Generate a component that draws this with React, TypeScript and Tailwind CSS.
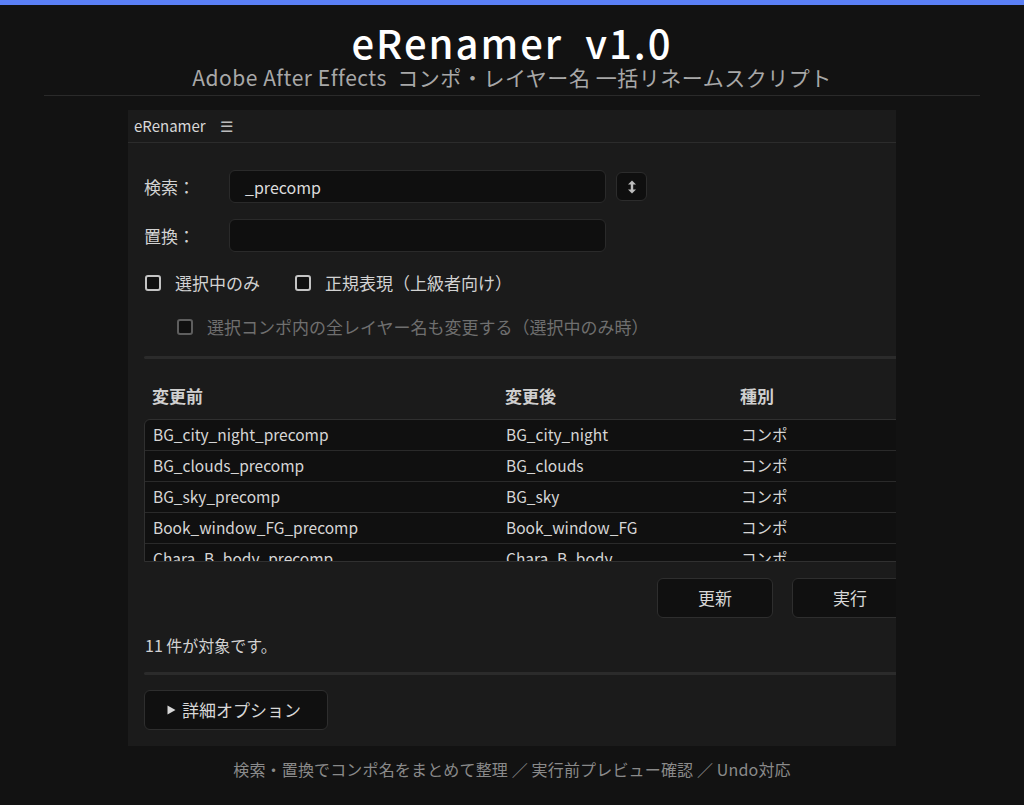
import React from 'react';

const rows = [
  { before: 'BG_city_night_precomp', after: 'BG_city_night', kind: 'コンポ' },
  { before: 'BG_clouds_precomp', after: 'BG_clouds', kind: 'コンポ' },
  { before: 'BG_sky_precomp', after: 'BG_sky', kind: 'コンポ' },
  { before: 'Book_window_FG_precomp', after: 'Book_window_FG', kind: 'コンポ' },
  { before: 'Chara_B_body_precomp', after: 'Chara_B_body', kind: 'コンポ' },
  { before: 'Chara_B_face_precomp', after: 'Chara_B_face', kind: 'コンポ' },
];

function Checkbox({ label, disabled = false }: { label: string; disabled?: boolean }) {
  return (
    <label className={`flex items-center gap-[14px] ${disabled ? 'text-[#6f6f6f]' : 'text-[#d2d2d2]'}`}>
      <span
        className={`w-4 h-4 rounded-[3px] border-2 bg-[#101010] flex-shrink-0 ${
          disabled ? 'border-[#5e5e5e]' : 'border-[#c4c4c4]'
        }`}
      />
      <span>{label}</span>
    </label>
  );
}

function Separator() {
  return <div className="h-[3px] rounded-full bg-[#2b2b2b]" />;
}

export default function App() {
  return (
    <div
      className="min-h-[805px] bg-[#121212] flex flex-col items-center"
      style={{ fontFamily: '"Noto Sans CJK JP", "Noto Sans", sans-serif' }}
    >
      {/* top accent */}
      <div className="w-full h-[5px] bg-[#5b80f6]" />

      {/* Title block */}
      <div className="w-[936px] flex flex-col items-center border-b border-[#2a2a2a] pb-[5px]">
        <h1 className="mt-[15px] text-[40px] leading-[44px] font-medium text-white whitespace-pre tracking-[0.05em]">
          eRenamer  v1.0
        </h1>
        <p className="text-[21px] leading-[26px] text-[#a8a8a8] whitespace-pre tracking-wide">
          Adobe After Effects  コンポ・レイヤー名 一括リネームスクリプト
        </p>
      </div>

      {/* Panel */}
      <div className="mt-[14px] w-[768px] bg-[#1b1b1b] overflow-hidden">
        <div className="h-[33px] flex items-center gap-[14px] pl-[6px] border-b border-[#2c2c2c] text-[15px] text-[#d8d8d8]">
          <span>eRenamer</span>
          <span className="text-[15px] text-[#bcbcbc]">☰</span>
        </div>

        <div className="w-[796px] pl-[16px] pr-[16px] pt-[27px] pb-[16px] flex flex-col text-[17px] text-[#d2d2d2]">
          {/* search */}
          <div className="flex items-center">
            <span className="w-[85px] flex-shrink-0">検索：</span>
            <div className="w-[377px] h-[33px] rounded-md border border-[#2a2a2a] bg-[#0f0f0f] flex items-center px-[15px] text-[16px] text-[#dcdcdc]">
              _precomp
            </div>
            <button
              type="button"
              className="ml-[10px] w-[31px] h-[29px] rounded-md border border-[#2c2c2c] bg-[#0f0f0f] flex items-center justify-center text-[#bdbdbd]"
            >
              <svg width="10" height="14" viewBox="0 0 10 14" fill="currentColor">
                <path d="M5 0.5 L9 4.5 H6.2 V9.5 H9 L5 13.5 L1 9.5 H3.8 V4.5 H1 Z" />
              </svg>
            </button>
          </div>

          {/* replace */}
          <div className="flex items-center mt-[16px]">
            <span className="w-[85px] flex-shrink-0">置換：</span>
            <div className="w-[377px] h-[33px] rounded-md border border-[#2a2a2a] bg-[#0f0f0f]" />
          </div>

          {/* options */}
          <div className="flex items-center mt-[20px] h-[22px] pl-px">
            <Checkbox label="選択中のみ" />
            <div className="ml-[35px]">
              <Checkbox label="正規表現（上級者向け）" />
            </div>
          </div>
          <div className="flex items-center mt-[22px] h-[22px] pl-[33px]">
            <Checkbox label="選択コンポ内の全レイヤー名も変更する（選択中のみ時）" disabled />
          </div>

          <div className="mt-[18px]">
            <Separator />
          </div>

          {/* table header */}
          <div className="mt-[22px] flex font-bold text-[#cfcfcf] h-[30px] items-center pl-[8px]">
            <span className="w-[353px]">変更前</span>
            <span className="w-[235px]">変更後</span>
            <span>種別</span>
          </div>

          {/* table body */}
          <div className="mt-[8px] h-[143px] overflow-hidden rounded-tl-md border border-[#303030] bg-[#101010]">
            {rows.map(r => (
              <div
                key={r.before}
                className="h-[31px] flex items-center pl-[8px] border-b border-[#2a2a2a] text-[15.5px] text-[#d6d6d6]"
              >
                <span className="w-[353px]">{r.before}</span>
                <span className="w-[235px]">{r.after}</span>
                <span>{r.kind}</span>
              </div>
            ))}
          </div>

          {/* actions */}
          <div className="mt-[16px] flex justify-end gap-[19px]">
            <button
              type="button"
              className="w-[116px] h-[40px] rounded-md border border-[#2e2e2e] bg-[#101010] text-[17px] text-[#d8d8d8]"
            >
              更新
            </button>
            <button
              type="button"
              className="w-[116px] h-[40px] rounded-md border border-[#2e2e2e] bg-[#101010] text-[17px] text-[#d8d8d8]"
            >
              実行
            </button>
          </div>

          <div className="mt-[15px] h-[24px] flex items-center text-[16px] pl-px">11 件が対象です。</div>

          <div className="mt-[15px]">
            <Separator />
          </div>

          <button
            type="button"
            className="mt-[15px] w-[184px] h-[40px] rounded-md border border-[#2e2e2e] bg-[#101010] flex items-center gap-[6px] pl-[22px] text-[17px] text-[#d8d8d8]"
          >
            <svg width="9" height="10" viewBox="0 0 9 10" fill="currentColor">
              <path d="M0.5 0.5 L8.5 5 L0.5 9.5 Z" />
            </svg>
            詳細オプション
          </button>
        </div>
      </div>

      <p className="mt-[11px] text-[16px] text-[#8a8a8a] whitespace-pre tracking-[0.01em]">
        検索・置換でコンポ名をまとめて整理 ／ 実行前プレビュー確認 ／ Undo対応
      </p>
    </div>
  );
}
